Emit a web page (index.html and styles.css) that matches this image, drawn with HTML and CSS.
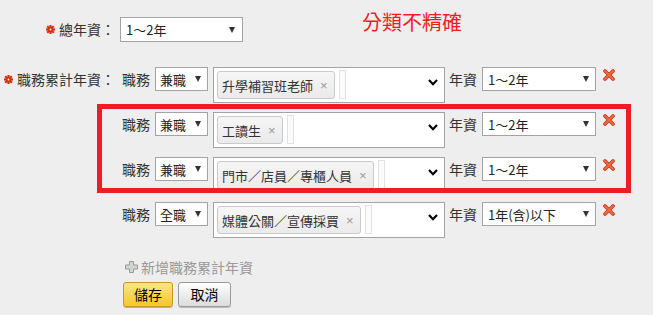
FILE: index.html
```html
<!DOCTYPE html>
<html lang="zh-Hant">
<head>
<meta charset="utf-8">
<title>職務累計年資</title>
<link rel="stylesheet" href="styles.css">
</head>
<body>
<div class="page">
  <div class="field field-top">
    <div class="label"><svg class="req" viewBox="0 0 9 9" width="9" height="9"><g stroke="#d0300f" stroke-width="2.2" stroke-linecap="square"><line x1="4.5" y1="1" x2="4.5" y2="8"/><line x1="1" y1="4.5" x2="8" y2="4.5"/><line x1="2" y1="2" x2="7" y2="7"/><line x1="7" y1="2" x2="2" y2="7"/></g><circle cx="4.5" cy="4.5" r="0.9" fill="#fff"/></svg>總年資：</div>
    <div class="select select-top"><span>1～2年</span><i class="arr"></i></div>
  </div>

  <div class="field field-jobs">
    <div class="label label-jobs"><svg class="req" viewBox="0 0 9 9" width="9" height="9"><g stroke="#d0300f" stroke-width="2.2" stroke-linecap="square"><line x1="4.5" y1="1" x2="4.5" y2="8"/><line x1="1" y1="4.5" x2="8" y2="4.5"/><line x1="2" y1="2" x2="7" y2="7"/><line x1="7" y1="2" x2="2" y2="7"/></g><circle cx="4.5" cy="4.5" r="0.9" fill="#fff"/></svg>職務累計年資：</div>
    <div class="job-list">
      <div class="job">
        <span class="job-label">職務</span>
        <div class="select select-type"><span>兼職</span><i class="arr"></i></div>
        <div class="multi">
          <span class="tag">升學補習班老師<i class="tag-x">×</i></span>
          <span class="stub"></span>
          <svg class="chev" viewBox="0 0 10 7" width="10" height="7"><polyline points="1,1 5,5.2 9,1" fill="none" stroke="#000" stroke-width="2.2"/></svg>
        </div>
        <span class="year-label">年資</span>
        <div class="select select-year"><span>1～2年</span><i class="arr"></i></div>
        <svg class="del" viewBox="0 0 12 12" width="12" height="12"><g stroke-linecap="round"><line x1="2" y1="2" x2="10" y2="10" stroke="#c9331b" stroke-width="3.6"/><line x1="10" y1="2" x2="2" y2="10" stroke="#c9331b" stroke-width="3.6"/><line x1="2" y1="2" x2="10" y2="10" stroke="#f06a3c" stroke-width="2"/><line x1="10" y1="2" x2="2" y2="10" stroke="#f06a3c" stroke-width="2"/></g></svg>
      </div>

      <div class="job">
        <span class="job-label">職務</span>
        <div class="select select-type"><span>兼職</span><i class="arr"></i></div>
        <div class="multi">
          <span class="tag">工讀生<i class="tag-x">×</i></span>
          <span class="stub"></span>
          <svg class="chev" viewBox="0 0 10 7" width="10" height="7"><polyline points="1,1 5,5.2 9,1" fill="none" stroke="#000" stroke-width="2.2"/></svg>
        </div>
        <span class="year-label">年資</span>
        <div class="select select-year"><span>1～2年</span><i class="arr"></i></div>
        <svg class="del" viewBox="0 0 12 12" width="12" height="12"><g stroke-linecap="round"><line x1="2" y1="2" x2="10" y2="10" stroke="#c9331b" stroke-width="3.6"/><line x1="10" y1="2" x2="2" y2="10" stroke="#c9331b" stroke-width="3.6"/><line x1="2" y1="2" x2="10" y2="10" stroke="#f06a3c" stroke-width="2"/><line x1="10" y1="2" x2="2" y2="10" stroke="#f06a3c" stroke-width="2"/></g></svg>
      </div>

      <div class="job">
        <span class="job-label">職務</span>
        <div class="select select-type"><span>兼職</span><i class="arr"></i></div>
        <div class="multi">
          <span class="tag">門市／店員／專櫃人員<i class="tag-x">×</i></span>
          <span class="stub"></span>
          <svg class="chev" viewBox="0 0 10 7" width="10" height="7"><polyline points="1,1 5,5.2 9,1" fill="none" stroke="#000" stroke-width="2.2"/></svg>
        </div>
        <span class="year-label">年資</span>
        <div class="select select-year"><span>1～2年</span><i class="arr"></i></div>
        <svg class="del" viewBox="0 0 12 12" width="12" height="12"><g stroke-linecap="round"><line x1="2" y1="2" x2="10" y2="10" stroke="#c9331b" stroke-width="3.6"/><line x1="10" y1="2" x2="2" y2="10" stroke="#c9331b" stroke-width="3.6"/><line x1="2" y1="2" x2="10" y2="10" stroke="#f06a3c" stroke-width="2"/><line x1="10" y1="2" x2="2" y2="10" stroke="#f06a3c" stroke-width="2"/></g></svg>
      </div>

      <div class="job">
        <span class="job-label">職務</span>
        <div class="select select-type"><span>全職</span><i class="arr"></i></div>
        <div class="multi">
          <span class="tag">媒體公關／宣傳採買<i class="tag-x">×</i></span>
          <span class="stub"></span>
          <svg class="chev" viewBox="0 0 10 7" width="10" height="7"><polyline points="1,1 5,5.2 9,1" fill="none" stroke="#000" stroke-width="2.2"/></svg>
        </div>
        <span class="year-label">年資</span>
        <div class="select select-year"><span>1年(含)以下</span><i class="arr"></i></div>
        <svg class="del" viewBox="0 0 12 12" width="12" height="12"><g stroke-linecap="round"><line x1="2" y1="2" x2="10" y2="10" stroke="#c9331b" stroke-width="3.6"/><line x1="10" y1="2" x2="2" y2="10" stroke="#c9331b" stroke-width="3.6"/><line x1="2" y1="2" x2="10" y2="10" stroke="#f06a3c" stroke-width="2"/><line x1="10" y1="2" x2="2" y2="10" stroke="#f06a3c" stroke-width="2"/></g></svg>
      </div>

      <a class="add" href="#"><svg class="plus" viewBox="0 0 13 12" width="13" height="12"><path d="M4.5 0.5h4v3.5h4v4h-4v3.5h-4v-3.5h-4v-4h4z" fill="#d4d4d4" stroke="#999" stroke-width="1"/></svg>新增職務累計年資</a>

      <div class="buttons">
        <button class="btn btn-save" type="button">儲存</button>
        <button class="btn btn-cancel" type="button">取消</button>
      </div>
    </div>
  </div>

  <div class="note">分類不精確</div>
  <div class="highlight"></div>
</div>
</body>
</html>
```

FILE: styles.css
```css
* { box-sizing: border-box; }

html, body {
  margin: 0;
  padding: 0;
  background: #eeeeee;
}

body {
  font-family: "Noto Sans CJK TC", "Noto Sans", sans-serif;
  font-size: 13px;
  color: #333;
}

.page {
  position: relative;
  width: 653px;
  height: 315px;
  overflow: hidden;
}

.field {
  display: flex;
  align-items: flex-start;
}

.field-top {
  padding-top: 17px;
}

.field-jobs {
  margin-top: 25px;
}

.label {
  width: 115px;
  margin-right: 5px;
  display: flex;
  justify-content: flex-end;
  align-items: center;
  font-size: 14px;
  line-height: 25px;
  color: #333;
  white-space: nowrap;
}

.label-jobs {
  line-height: 24px;
}

.req {
  margin-right: 4px;
  flex: none;
}

.select {
  position: relative;
  display: flex;
  align-items: center;
  background: #fff;
  border: 1px solid #a3a3a3;
  height: 24px;
  padding-left: 5px;
  color: #222;
  font-size: 13px;
  white-space: nowrap;
}

.select-top {
  width: 123px;
  height: 25px;
}

.select-type {
  width: 53px;
  padding-left: 4px;
}

.select-year {
  width: 114px;
}

.arr {
  position: absolute;
  top: 50%;
  right: 6px;
  margin-top: -3px;
  width: 0;
  height: 0;
  border-left: 3px solid transparent;
  border-right: 3px solid transparent;
  border-top: 6px solid #333;
}

.select-top .arr { right: 7px; }

.job-list {
  display: flex;
  flex-direction: column;
  align-items: flex-start;
}

.job {
  display: flex;
  align-items: flex-start;
  height: 36px;
  margin-bottom: 9px;
}

.job:last-of-type { margin-bottom: 0; }

.job-label,
.year-label {
  font-size: 14px;
  line-height: 24px;
  color: #333;
  white-space: nowrap;
}

.job-label {
  margin-left: 2px;
  margin-right: 5px;
}

.select-type { margin-right: 5px; }

.multi {
  position: relative;
  display: flex;
  align-items: flex-start;
  width: 232px;
  height: 36px;
  background: #fff;
  border: 1px solid #a3a3a3;
  padding: 3px 0 0 3px;
  margin-right: 4px;
}

.tag {
  display: inline-flex;
  align-items: center;
  height: 28px;
  padding: 0 6px 0 4px;
  background: linear-gradient(#f6f6f6, #eaeaea);
  border: 1px solid #c9c9c9;
  border-radius: 3px;
  font-size: 13px;
  color: #333;
  white-space: nowrap;
}

.tag-x {
  font-family: "Liberation Sans", "DejaVu Sans", sans-serif;
  font-style: normal;
  color: #999;
  font-size: 13px;
  margin-left: 7px;
}

.stub {
  width: 7px;
  height: 29px;
  margin-left: 4px;
  margin-top: -1px;
  border: 1px solid #e2e2e2;
  background: #fbfbfb;
}

.chev {
  position: absolute;
  right: 6px;
  top: 11px;
}

.year-label { margin-right: 5px; }

.select-year { margin-right: 7px; }

.del {
  margin-top: 2px;
  flex: none;
}

.add {
  display: flex;
  align-items: center;
  margin-top: 10px;
  margin-left: 5px;
  font-size: 14px;
  line-height: 20px;
  color: #999;
  text-decoration: none;
  white-space: nowrap;
}

.plus {
  margin-right: 3px;
  flex: none;
}

.buttons {
  display: flex;
  gap: 5px;
  margin-top: 5px;
  margin-left: 3px;
}

.btn {
  height: 25px;
  padding: 0;
  font-family: inherit;
  font-size: 14px;
  color: #000;
  border-radius: 3px;
  line-height: 23px;
  cursor: pointer;
}

.btn-save {
  width: 50px;
  border: 1px solid #c49a22;
  background: linear-gradient(#ffe683, #f6c52e);
  box-shadow: 0 1px 0 #d8b25a;
}

.btn-cancel {
  width: 53px;
  border: 1px solid #9a9a9a;
  background: linear-gradient(#ffffff, #dcdcdc);
  box-shadow: 0 1px 0 #bbb;
}

.note {
  position: absolute;
  left: 362px;
  top: 8px;
  font-size: 20px;
  line-height: 28px;
  color: #ee1c24;
  white-space: nowrap;
}

.highlight {
  position: absolute;
  left: 97px;
  top: 104px;
  width: 534px;
  height: 89px;
  border: 5px solid #ee1c24;
  pointer-events: none;
}
```
